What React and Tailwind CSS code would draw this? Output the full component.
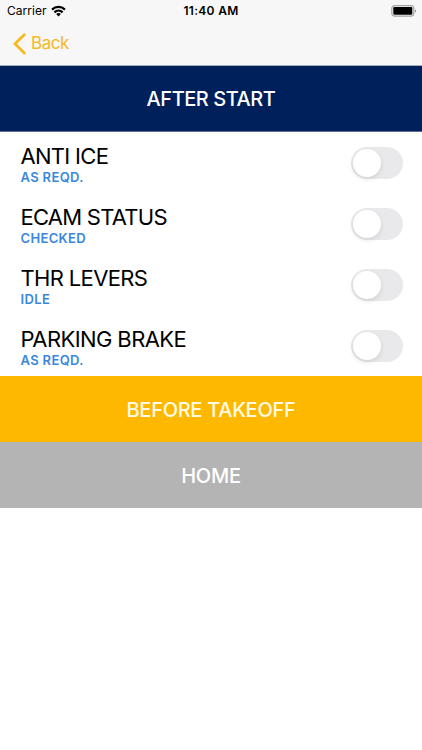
import React, { useState } from "react";

const items = [
  { title: "ANTI ICE", action: "AS REQD.", titleClass: "tracking-[-0.7px]" },
  { title: "ECAM STATUS", action: "CHECKED", titleClass: "tracking-[-0.75px]" },
  { title: "THR LEVERS", action: "IDLE", titleClass: "tracking-[-0.65px]" },
  { title: "PARKING BRAKE", action: "AS REQD.", titleClass: "tracking-[-0.6px]" },
];

function WifiIcon() {
  return (
    <svg width="15" height="12" viewBox="0 0 16 12" preserveAspectRatio="none" fill="none" stroke="#000" strokeWidth="2.3">
      <path d="M1.1 4.6C5 .9 11 .9 14.9 4.6" />
      <path d="M3.6 7.3C6.1 5 9.9 5 12.4 7.3" />
      <path d="M5.5 8.9C6.9 7.7 9.1 7.7 10.5 8.9L8 11.6Z" fill="#000" stroke="none" />
    </svg>
  );
}

function BatteryIcon() {
  return (
    <svg width="26" height="12" viewBox="0 0 26 12" fill="none">
      <rect x=".8" y=".6" width="22" height="10.6" rx="3" stroke="#a3a3a3" strokeWidth="1.2" />
      <rect x="2.3" y="2.1" width="19" height="7.6" rx="1.2" fill="#000" />
      <path d="M24 4.2C25.4 4.7 25.4 7.1 24 7.6Z" fill="#8c8c8c" />
    </svg>
  );
}

function StatusBar() {
  return (
    <div className="grid h-[22px] grid-cols-3 items-center pl-[7px] pr-[5px] text-[12px] leading-none text-black">
      <div className="flex items-center gap-[5px]">
        <span className="tracking-[0.02px]">Carrier</span>
        <WifiIcon />
      </div>
      <span className="pr-[2px] text-center font-semibold tracking-[0.3px]">11:40 AM</span>
      <div className="flex justify-end">
        <BatteryIcon />
      </div>
    </div>
  );
}

function Toggle({ on, onChange, label }) {
  return (
    <button
      role="switch"
      aria-checked={on}
      aria-label={label}
      onClick={onChange}
      className={`flex h-8 w-[52px] items-center rounded-full px-[2px] ${on ? "justify-end bg-[#34c759]" : "justify-start bg-[#e9e9eb]"}`}
    >
      <span className="h-[28px] w-[28px] rounded-full bg-white shadow-[0px_2px_5px_rgba(0,0,0,0.11)]" />
    </button>
  );
}

export default function App() {
  const [checked, setChecked] = useState({});

  const toggle = (index) => {
    setChecked({ ...checked, [index]: !checked[index] });
  };

  return (
    <main className="h-[750px] w-full overflow-hidden bg-white font-[Inter,'Liberation_Sans',sans-serif]">
      <header className="h-[66px] border-b border-[#a6adba] bg-[#f7f7f7]">
        <StatusBar />
        <button className="flex h-[43px] items-center gap-[5px] pl-[13px] text-[#f5b921]">
          <svg width="13" height="22" viewBox="0 0 13 22" fill="none" stroke="currentColor" strokeWidth="2.8" strokeLinecap="round">
            <path d="M11.3 1.7L2 10.8L11.3 19.9" />
          </svg>
          <span className="text-[17px] tracking-[-0.45px]">Back</span>
        </button>
      </header>

      <h1 className="flex h-[66px] items-center justify-center border-b border-[#5b6b91] bg-[#00205c] text-[20px] font-[550] tracking-[-0.45px] text-white">
        AFTER START
      </h1>

      <ul>
        {items.map((item, index) => (
          <li key={index} className="flex h-[61px] justify-between pl-[20.5px] pr-[19px]">
            <div className="flex flex-col pt-[10px]">
              <span className={`text-[22px] leading-7 text-black ${item.titleClass}`}>{item.title}</span>
              <span className="text-[13px] font-semibold leading-[14px] tracking-[0.35px] text-[#3b87dc]">{item.action}</span>
            </div>
            <div className="pt-[15px]">
              <Toggle on={!!checked[index]} onChange={() => toggle(index)} label={item.title} />
            </div>
          </li>
        ))}
      </ul>

      <button className="flex h-[66px] w-full items-center justify-center bg-[#ffb800] pt-px text-[20px] font-medium tracking-[-0.28px] text-[#fffbe6]">
        BEFORE TAKEOFF
      </button>
      <button className="flex h-[66px] w-full items-center justify-center bg-[#b4b4b4] pt-px text-[20px] font-medium tracking-[-0.25px] text-white">
        HOME
      </button>
    </main>
  );
}
